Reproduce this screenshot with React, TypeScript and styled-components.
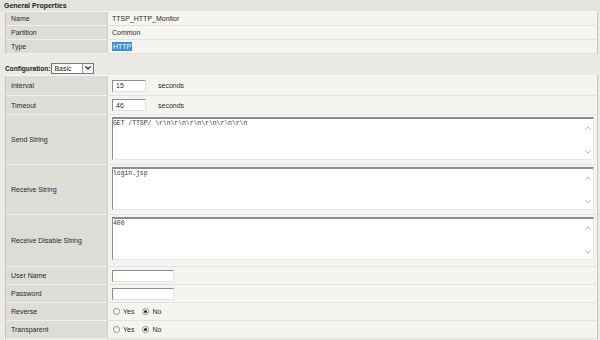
import React from "react";
import styled, { createGlobalStyle } from "styled-components";

const Global = createGlobalStyle`
  html, body { margin: 0; padding: 0; background: #ebeae5; }
  body { font-family: "Liberation Sans", Arial, sans-serif; font-size: 7px; color: #222; }
`;

const Page = styled.div`
  width: 600px;
  height: 340px;
  overflow: hidden;
  background: #ebeae5;
  display: flex;
  flex-direction: column;
`;

const SectionTitle = styled.div`
  height: 11px;
  line-height: 11px;
  padding-left: 4px;
  font-weight: bold;
  font-size: 7px;
  background: #e4e3de;
  color: #222;
`;

const Table = styled.div`
  margin-left: 5px;
  width: 591px;
  display: grid;
  grid-template-columns: 102px 1fr;
  border-left: 1px solid #c9c8c3;
  border-right: 1px solid #c9c8c3;
  border-top: 1px solid #f7f7f4;
`;

const Label = styled.div<{ $h: number }>`
  height: ${(p) => p.$h - 1}px;
  background: #dddcd7;
  border-bottom: 1px solid #efeeea;
  border-right: 1px solid #cfceca;
  display: flex;
  align-items: center;
  padding-left: 5px;
  font-size: 7px;
  color: #2a2a2a;
`;

const Value = styled.div<{ $h: number }>`
  height: ${(p) => p.$h - 1}px;
  background: #f5f4f1;
  border-bottom: 1px solid #e3e2de;
  display: flex;
  align-items: center;
  padding-left: 4px;
  padding-right: 3px;
  font-size: 7px;
  color: #2a2a2a;
`;

const Selected = styled.span`
  background: #3b8fe8;
  color: #fff;
  padding: 1px 1px;
`;

const ConfigBar = styled.div`
  height: 14px;
  margin-top: 7px;
  display: flex;
  align-items: center;
  padding-left: 5px;
  gap: 1px;
  font-size: 6.6px;
  font-weight: bold;
`;

const SelectBox = styled.div`
  width: 43px;
  height: 11px;
  background: #fff;
  border: 1px solid #7a7a7a;
  display: flex;
  align-items: center;
  justify-content: space-between;
  padding-left: 2px;
  box-sizing: border-box;
  font-weight: normal;
  font-size: 7px;
`;

const SelectArrow = styled.div`
  width: 10px;
  height: 9px;
  border-left: 1px solid #9a9a9a;
  background: #f2f2f2;
  display: flex;
  align-items: center;
  justify-content: center;
`;

const TextInput = styled.div<{ $w: number }>`
  width: ${(p) => p.$w}px;
  height: 12px;
  background: #fff;
  border-top: 1px solid #8d8d8d;
  border-left: 1px solid #8d8d8d;
  border-right: 1px solid #e2e2e2;
  border-bottom: 1px solid #e2e2e2;
  box-sizing: border-box;
  display: flex;
  align-items: center;
  padding-left: 3px;
  font-size: 7px;
`;

const Unit = styled.span`
  margin-left: 12px;
  font-size: 7px;
`;

const AreaWrap = styled.div`
  align-self: flex-start;
  margin-top: 2px;
  flex: 1;
  height: 43px;
  background: #fff;
  border-top: 2px solid #8d8d8d;
  border-left: 1px solid #8d8d8d;
  border-bottom: 1px solid #e6e6e6;
  border-right: 1px solid #e6e6e6;
  box-sizing: border-box;
  display: flex;
`;

const AreaText = styled.div`
  flex: 1;
  padding: 1px 0 0 0;
  font-family: "Liberation Mono", "Courier New", monospace;
  font-size: 6.4px;
  color: #333;
  white-space: pre;
`;

const ScrollCol = styled.div`
  width: 10px;
  display: flex;
  flex-direction: column;
  justify-content: space-between;
  align-items: center;
  padding: 7px 0 5px;
`;

const RadioGroup = styled.div`
  display: flex;
  align-items: center;
  gap: 3px;
  padding-left: 1px;
`;

const Radio = styled.span<{ $on?: boolean }>`
  width: 7px;
  height: 7px;
  border-radius: 50%;
  border: 1px solid #8a8a8a;
  background: #fff;
  box-sizing: border-box;
  display: inline-flex;
  align-items: center;
  justify-content: center;
  &::after {
    content: "";
    width: 3px;
    height: 3px;
    border-radius: 50%;
    background: ${(p) => (p.$on ? "#222" : "transparent")};
  }
`;

const RadioLabel = styled.span`
  margin-right: 5px;
  font-size: 7px;
`;

const Chevron = ({ up }: { up?: boolean }) => (
  <svg width="6" height="4" viewBox="0 0 6 4">
    <path
      d={up ? "M0.5 3.5 L3 1 L5.5 3.5" : "M0.5 0.5 L3 3 L5.5 0.5"}
      fill="none"
      stroke="#b5b5b5"
      strokeWidth="1"
    />
  </svg>
);

const TextArea = ({ text }: { text: string }) => (
  <AreaWrap>
    <AreaText>{text}</AreaText>
    <ScrollCol>
      <Chevron up />
      <Chevron />
    </ScrollCol>
  </AreaWrap>
);

const YesNo = () => (
  <RadioGroup>
    <Radio />
    <RadioLabel>Yes</RadioLabel>
    <Radio $on />
    <RadioLabel>No</RadioLabel>
  </RadioGroup>
);

type Row = { label: string; h: number; content: React.ReactNode };

const general: Row[] = [
  { label: "Name", h: 14, content: "TTSP_HTTP_Monitor" },
  { label: "Partition", h: 14, content: "Common" },
  { label: "Type", h: 14, content: <Selected>HTTP</Selected> },
];

const config: Row[] = [
  {
    label: "Interval",
    h: 20,
    content: (
      <>
        <TextInput $w={34}>15</TextInput>
        <Unit>seconds</Unit>
      </>
    ),
  },
  {
    label: "Timeout",
    h: 19,
    content: (
      <>
        <TextInput $w={34}>46</TextInput>
        <Unit>seconds</Unit>
      </>
    ),
  },
  { label: "Send String", h: 50, content: <TextArea text={"GET /TTSP/ \\r\\n\\r\\n\\r\\n\\r\\n\\r\\n\\r\\n"} /> },
  { label: "Receive String", h: 50, content: <TextArea text="login.jsp" /> },
  { label: "Receive Disable String", h: 52, content: <TextArea text="400" /> },
  { label: "User Name", h: 18, content: <TextInput $w={62} /> },
  { label: "Password", h: 18, content: <TextInput $w={62} /> },
  { label: "Reverse", h: 18, content: <YesNo /> },
  { label: "Transparent", h: 18, content: <YesNo /> },
];

const renderRows = (rows: Row[]) =>
  rows.map((r) => (
    <React.Fragment key={r.label}>
      <Label $h={r.h}>{r.label}</Label>
      <Value $h={r.h}>{r.content}</Value>
    </React.Fragment>
  ));

export default function App() {
  return (
    <>
      <Global />
      <Page>
        <SectionTitle>General Properties</SectionTitle>
        <Table>{renderRows(general)}</Table>
        <ConfigBar>
          <span>Configuration:</span>
          <SelectBox>
            <span>Basic</span>
            <SelectArrow>
              <svg width="6" height="4" viewBox="0 0 6 4">
                <path d="M0.5 0.5 L3 3 L5.5 0.5" fill="none" stroke="#222" strokeWidth="1.2" />
              </svg>
            </SelectArrow>
          </SelectBox>
        </ConfigBar>
        <Table>{renderRows(config)}</Table>
      </Page>
    </>
  );
}
